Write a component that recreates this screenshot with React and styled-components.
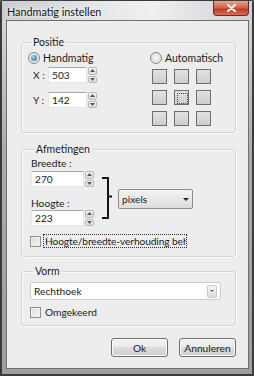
import React from 'react';
import styled, { createGlobalStyle } from 'styled-components';

const Global = createGlobalStyle`
  html, body { margin: 0; padding: 0; background: #5a5a5a; }
  body { font-family: Lato, "Noto Sans", sans-serif; font-size: 10.2px; color: #1b1b1b; }
  * { box-sizing: border-box; }
`;

const Window = styled.div`
  width: 254px;
  height: 376px;
  display: flex;
  flex-direction: column;
  padding: 0 3px 5px 4px;
  border: 2px solid #3b3b3b;
  border-top-width: 1px;
  border-radius: 5px 5px 0 0;
  background: linear-gradient(#e4e6e8 0%, #d2d5d8 6%, #a9acaf 40%, #9c9fa2 100%);
`;

const TitleBar = styled.div`
  height: 19px;
  display: flex;
  align-items: flex-start;
  justify-content: space-between;
  margin: 0 -3px 0 -4px;
  padding-left: 5px;
  background: linear-gradient(90deg, #c9ccd0 0%, #e3e5e7 35%, #eef0f1 60%, #cfd2d5 100%);
`;

const Title = styled.div`
  padding-top: 4px;
  font-size: 10.8px;
  color: #111;
  text-shadow: 0 0 6px #fff, 0 0 3px #fff;
`;

const CloseButton = styled.div`
  width: 36px;
  height: 15px;
  margin-right: 3px;
  display: flex;
  align-items: center;
  justify-content: center;
  border: 1px solid #6b2a22;
  border-top: none;
  border-radius: 0 0 4px 4px;
  background: linear-gradient(#e9a394 0%, #d4654f 45%, #c03c22 60%, #d8705a 100%);
`;

const Client = styled.div`
  flex: 1;
  display: flex;
  flex-direction: column;
  padding: 15px 12px 0 14px;
  border: 1px solid #6f6f6f;
  background: #ededed;
`;

const Group = styled.fieldset`
  margin: ${(p) => p.$top || 0}px 0 0 0;
  padding: ${(p) => p.$pad};
  border: 1px solid #d3d3d3;
  border-radius: 3px;
  box-shadow: inset 1px 1px 0 #fafafa, 1px 1px 0 #fafafa;
  height: ${(p) => p.$h}px;
`;

const Legend = styled.legend`
  margin-left: 3px;
  padding: 0 2px;
  font-size: 10.5px;
  line-height: 12px;
  color: #1b1b1b;
`;

const Row = styled.div`
  display: flex;
  align-items: ${(p) => p.$align || 'center'};
`;

const Col = styled.div`
  display: flex;
  flex-direction: column;
  width: ${(p) => (p.$w ? `${p.$w}px` : 'auto')};
`;

const RadioRow = styled.label`
  display: flex;
  align-items: center;
  gap: 3px;
  height: 13px;
  font-size: 10.5px;
`;

const RadioCircle = styled.span`
  width: 12px;
  height: 12px;
  border-radius: 50%;
  border: 1px solid #8a8a8a;
  background: radial-gradient(circle, #f5f5f5 0%, #d6d6d6 100%);
  display: flex;
  align-items: center;
  justify-content: center;
  &::after {
    content: '';
    display: ${(p) => (p.$on ? 'block' : 'none')};
    width: 6px;
    height: 6px;
    border-radius: 50%;
    background: radial-gradient(circle at 40% 35%, #9fd0f0, #1b5f8f);
  }
`;

const FieldRow = styled.div`
  display: flex;
  align-items: center;
  margin: ${(p) => p.$m};
  height: 16px;
`;

const FieldLabel = styled.span`
  width: ${(p) => p.$w}px;
`;

const TextBox = styled.div`
  width: ${(p) => p.$w}px;
  height: 16px;
  padding: 1px 3px;
  border: 1px solid #e2e6ea;
  border-top-color: #a6a9ae;
  background: #fff;
  line-height: 13px;
`;

const Spinner = styled.div`
  width: 9px;
  height: 16px;
  margin-left: 1px;
  display: flex;
  flex-direction: column;
  gap: 1px;
`;

const SpinHalf = styled.div`
  flex: 1;
  display: flex;
  align-items: center;
  justify-content: center;
  border: 1px solid #b8b8b8;
  border-radius: 2px;
  background: linear-gradient(#f6f6f6, #dcdcdc);
`;

const Arrow = ({ up }) => (
  <svg width="5" height="3" viewBox="0 0 5 3">
    <path d={up ? 'M0 3 L2.5 0 L5 3 Z' : 'M0 0 L2.5 3 L5 0 Z'} fill="#555" />
  </svg>
);

const Spin = () => (
  <Spinner>
    <SpinHalf><Arrow up /></SpinHalf>
    <SpinHalf><Arrow /></SpinHalf>
  </Spinner>
);

const PosGrid = styled.div`
  display: grid;
  grid-template-columns: repeat(3, 15px);
  grid-auto-rows: 15px;
  column-gap: 7px;
  row-gap: 6px;
  margin: 5px 0 0 2px;
`;

const PosCell = styled.div`
  border: 1px solid #6e6e6e;
  background: linear-gradient(#e2e2e2, #cdcdcd);
  padding: 2px;
  &::after {
    content: '';
    display: ${(p) => (p.$focus ? 'block' : 'none')};
    width: 100%;
    height: 100%;
    border: 1px dotted #444;
  }
`;

const SmallLabel = styled.div`
  line-height: 12px;
  margin: ${(p) => p.$m};
`;

const Bracket = styled.svg`
  margin: 20px 0 0 8px;
  flex-shrink: 0;
`;

const Combo = styled.div`
  width: ${(p) => p.$w}px;
  height: ${(p) => p.$h}px;
  margin: ${(p) => p.$m || 0};
  display: flex;
  align-items: center;
  justify-content: space-between;
  padding: 0 3px;
  border: 1px solid ${(p) => (p.$flat ? '#c9ccd0' : '#8c8c8c')};
  border-radius: 2px;
  background: ${(p) => (p.$flat ? '#fff' : 'linear-gradient(#f4f4f4, #dcdcdc)')};
`;

const ComboButton = styled.div`
  width: 10px;
  height: 13px;
  display: flex;
  align-items: center;
  justify-content: center;
  border: 1px solid #c9c9c9;
  border-radius: 2px;
  background: linear-gradient(#f4f4f4, #dedede);
`;

const CheckRow = styled.label`
  display: flex;
  align-items: center;
  gap: 2px;
  margin: ${(p) => p.$m};
  white-space: nowrap;
`;

const CheckBox = styled.span`
  width: 11px;
  height: 11px;
  flex-shrink: 0;
  border: 1px solid #8e8f8f;
  background: linear-gradient(135deg, #dcdcdc, #f6f6f6);
  box-shadow: inset 0 0 0 1px #f0f0f0;
`;

const CheckText = styled.span`
  padding: 0 1px;
  border: 1px dotted ${(p) => (p.$focus ? '#333' : 'transparent')};
  width: ${(p) => (p.$w ? `${p.$w}px` : 'auto')};
  overflow: hidden;
  line-height: 12px;
  letter-spacing: ${(p) => (p.$focus ? '-0.1px' : '0')};
`;

const ButtonRow = styled.div`
  display: flex;
  justify-content: flex-end;
  gap: 11px;
  margin-top: 12px;
`;

const Button = styled.div`
  width: 57px;
  height: 19px;
  display: flex;
  align-items: center;
  justify-content: center;
  border: 1px solid #707070;
  border-radius: 3px;
  background: linear-gradient(#f2f2f2 0%, #ebebeb 45%, #dddddd 50%, #cfcfcf 100%);
  box-shadow: inset 0 0 0 1px #fbfbfb;
`;

const DownArrow = ({ w = 6, h = 3, color = '#222' }) => (
  <svg width={w} height={h} viewBox={`0 0 ${w} ${h}`}>
    <path d={`M0 0 L${w / 2} ${h} L${w} 0 Z`} fill={color} />
  </svg>
);

export default function App() {
  return (
    <>
      <Global />
      <Window>
        <TitleBar>
          <Title>Handmatig instellen</Title>
          <CloseButton>
            <svg width="9" height="8" viewBox="0 0 9 8">
              <path d="M1 1 L8 7 M8 1 L1 7" stroke="#fff" strokeWidth="2" strokeLinecap="round" />
            </svg>
          </CloseButton>
        </TitleBar>
        <Client>
          <Group $pad="3px 0 0 6px" $h={97}>
            <Legend>Positie</Legend>
            <Row $align="flex-start">
              <Col $w={122}>
                <RadioRow><RadioCircle $on />Handmatig</RadioRow>
                <FieldRow $m="3px 0 0 5px">
                  <FieldLabel $w={15}>X :</FieldLabel>
                  <TextBox $w={39}>503</TextBox>
                  <Spin />
                </FieldRow>
                <FieldRow $m="9px 0 0 5px">
                  <FieldLabel $w={15}>Y :</FieldLabel>
                  <TextBox $w={39}>142</TextBox>
                  <Spin />
                </FieldRow>
              </Col>
              <Col>
                <RadioRow><RadioCircle />Automatisch</RadioRow>
                <PosGrid>
                  {Array.from({ length: 9 }, (_, i) => (
                    <PosCell key={i} $focus={i === 4} />
                  ))}
                </PosGrid>
              </Col>
            </Row>
          </Group>

          <Group $top={10} $pad="2px 0 0 9px" $h={114}>
            <Legend>Afmetingen</Legend>
            <Row $align="flex-start">
              <Col>
                <SmallLabel $m="0">Breedte :</SmallLabel>
                <FieldRow $m="2px 0 0 0">
                  <TextBox $w={53}>270</TextBox>
                  <Spin />
                </FieldRow>
                <SmallLabel $m="10px 0 1px 0">Hoogte :</SmallLabel>
                <FieldRow $m="0">
                  <TextBox $w={53}>223</TextBox>
                  <Spin />
                </FieldRow>
              </Col>
              <Bracket width="11" height="42" viewBox="0 0 11 42">
                <path d="M0 1 H6 V41 H0 M6 19.5 H10" stroke="#111" strokeWidth="2" fill="none" />
              </Bracket>
              <Combo $w={75} $h={20} $m="32px 0 0 5px">
                pixels
                <DownArrow />
              </Combo>
            </Row>
            <CheckRow $m="8px 0 0 -1px">
              <CheckBox />
              <CheckText $focus $w={144}>Hoogte/breedte-verhouding behouden</CheckText>
            </CheckRow>
          </Group>

          <Group $top={8} $pad="5px 0 0 8px" $h={61}>
            <Legend>Vorm</Legend>
            <Combo $flat $w={191} $h={18}>
              Rechthoek
              <ComboButton><DownArrow w={4} h={2} color="#666" /></ComboButton>
            </Combo>
            <CheckRow $m="5px 0 0 0">
              <CheckBox />
              <CheckText>Omgekeerd</CheckText>
            </CheckRow>
          </Group>

          <ButtonRow>
            <Button>Ok</Button>
            <Button>Annuleren</Button>
          </ButtonRow>
        </Client>
      </Window>
    </>
  );
}
